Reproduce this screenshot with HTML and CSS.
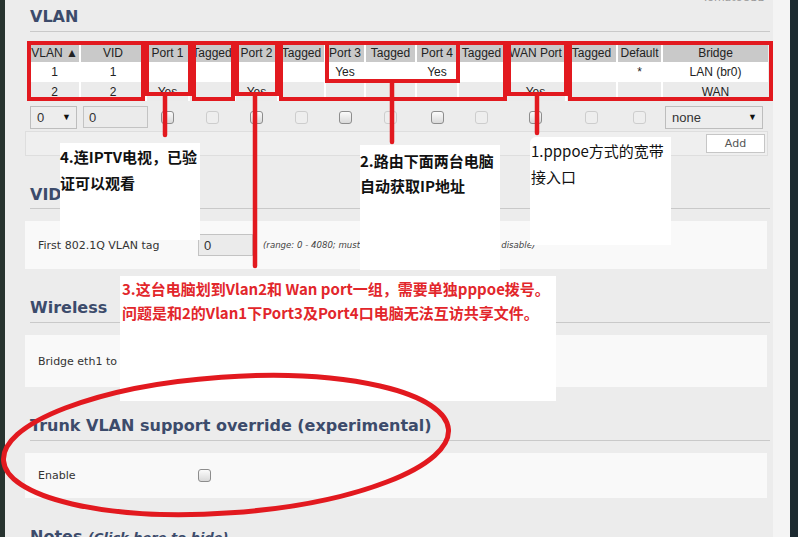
FILE: index.html
```html
<!DOCTYPE html>
<html lang="zh-CN">
<head>
<meta charset="utf-8">
<title>VLAN</title>
<link rel="stylesheet" href="styles.css">
</head>
<body>
<div class="frame">
  <div class="edge"></div>
  <div class="panel">
    <div class="brand">TomatoUSB</div>
    <h2 class="sec-title first">VLAN</h2>

    <div class="vlan-grid vlan-table">
      <div class="th">VLAN ▲</div><div class="th">VID</div><div class="th">Port 1</div><div class="th">Tagged</div><div class="th">Port 2</div><div class="th">Tagged</div><div class="th">Port 3</div><div class="th">Tagged</div><div class="th">Port 4</div><div class="th">Tagged</div><div class="th">WAN Port</div><div class="th">Tagged</div><div class="th">Default</div><div class="th">Bridge</div>

      <div class="td r1">1</div><div class="td r1">1</div><div class="td r1"></div><div class="td r1"></div><div class="td r1"></div><div class="td r1"></div><div class="td r1">Yes</div><div class="td r1"></div><div class="td r1">Yes</div><div class="td r1"></div><div class="td r1"></div><div class="td r1"></div><div class="td r1">*</div><div class="td r1">LAN (br0)</div>

      <div class="td r2">2</div><div class="td r2">2</div><div class="td r2">Yes</div><div class="td r2"></div><div class="td r2">Yes</div><div class="td r2"></div><div class="td r2"></div><div class="td r2"></div><div class="td r2"></div><div class="td r2"></div><div class="td r2">Yes</div><div class="td r2"></div><div class="td r2"></div><div class="td r2">WAN</div>
    </div>

    <div class="vlan-grid vlan-edit">
      <div class="ec start"><div class="fsel sel-vlan"><span>0</span><span class="arr">▼</span></div></div>
      <div class="ec start"><input class="txt vid-in" type="text" value="0"></div>
      <div class="ec"><input class="cb" type="checkbox"></div>
      <div class="ec"><input class="cb" type="checkbox" disabled></div>
      <div class="ec"><input class="cb" type="checkbox"></div>
      <div class="ec"><input class="cb" type="checkbox" disabled></div>
      <div class="ec"><input class="cb" type="checkbox"></div>
      <div class="ec"><input class="cb" type="checkbox" disabled></div>
      <div class="ec"><input class="cb" type="checkbox"></div>
      <div class="ec"><input class="cb" type="checkbox" disabled></div>
      <div class="ec"><input class="cb" type="checkbox"></div>
      <div class="ec"><input class="cb" type="checkbox" disabled></div>
      <div class="ec"><input class="cb" type="checkbox" disabled></div>
      <div class="ec start"><div class="fsel sel-br"><span>none</span><span class="arr">▼</span></div></div>
    </div>

    <div class="add-row"><button class="btn" type="button">Add</button></div>

    <h2 class="sec-title vid">VID Offset</h2>
    <div class="box h48">
      <label class="lbl">First 802.1Q VLAN tag</label>
      <input class="txt off-in" type="text" value="0">
      <span class="hint">(range: 0 - 4080; must be a multiple of 16; set to '0' to disable)</span>
    </div>

    <h2 class="sec-title">Wireless</h2>
    <div class="box h52">
      <label class="lbl">Bridge eth1 to</label>
      <div class="fsel sel-wl"><span>LAN (br0)</span><span class="arr">▼</span></div>
    </div>

    <h2 class="sec-title">Trunk VLAN support override (experimental)</h2>
    <div class="box h45">
      <label class="lbl">Enable</label>
      <input class="cb" type="checkbox">
    </div>

    <h2 class="sec-title notes">Notes <a class="hide-link">(Click here to hide)</a></h2>
  </div>
  <div class="strip"></div>

  <div class="note n4">4.连IPTV电视，已验<br>证可以观看</div>
  <div class="note n2">2.路由下面两台电脑<br>自动获取IP地址</div>
  <div class="note n1">1.pppoe方式的宽带<br>接入口</div>
  <div class="note n3">3.这台电脑划到Vlan2和 Wan port一组，需要单独pppoe拨号。<br>问题是和2的Vlan1下Port3及Port4口电脑无法互访共享文件。</div>

  <svg class="marks" width="798" height="537" viewBox="0 0 798 537" aria-hidden="true">
    <g fill="none" stroke="#e2191f" stroke-width="4">
      <rect x="29" y="43" width="114" height="56"/>
      <rect x="147" y="43" width="43" height="51"/>
      <rect x="194" y="43" width="39" height="56"/>
      <rect x="237" y="43" width="40" height="51"/>
      <rect x="281" y="43" width="224" height="56"/>
      <rect x="327" y="43" width="131" height="38"/>
      <rect x="509" y="43" width="57" height="51"/>
      <rect x="570" y="43" width="201" height="56"/>
    </g>
    <g stroke="#e2191f" stroke-width="4.5" stroke-linecap="round">
      <line x1="165" y1="96" x2="165" y2="135"/>
      <line x1="255" y1="96" x2="255" y2="266"/>
      <line x1="392" y1="83" x2="392" y2="142"/>
      <line x1="537" y1="96" x2="537" y2="133"/>
    </g>
    <ellipse cx="226" cy="445" rx="223" ry="68" transform="rotate(-4 226 445)" fill="none" stroke="#e2191f" stroke-width="5"/>
  </svg>
</div>
</body>
</html>
```
FILE: styles.css
```css
html, body {
  margin: 0;
  padding: 0;
}
body {
  background: #1c2a30;
  font-family: "DejaVu Sans", sans-serif;
  color: #222;
}
.frame {
  position: relative;
  width: 798px;
  height: 537px;
  overflow: hidden;
  display: flex;
}
.edge {
  width: 5px;
  background: #27332f;
}
.panel {
  width: 768px;
  box-sizing: border-box;
  padding: 0 3px 0 25px;
  background: #ececec;
  overflow: hidden;
}
.strip {
  width: 17px;
  background: #f4f4f4;
}

.brand {
  margin-top: -8px;
  height: 12px;
  font-size: 11px;
  line-height: 12px;
  text-align: right;
  padding-right: 5px;
  color: #9a9a9a;
}

.sec-title {
  margin: 29px 0 0;
  padding-bottom: 4px;
  font-family: "DejaVu Sans", sans-serif;
  font-weight: bold;
  font-size: 16px;
  line-height: 20px;
  color: #3c4b6b;
  border-bottom: 1px solid #c9c9c9;
  white-space: nowrap;
}
.sec-title.first { margin-top: 3px; }
.sec-title.vid { padding-bottom: 3px; }
.sec-title.notes { border-bottom: none; }
.hide-link {
  font-style: italic;
  font-size: 13px;
}

/* VLAN table */
.vlan-grid {
  display: grid;
  grid-template-columns: 49px 64px 41px 44px 41px 45px 38px 49px 40px 45px 59px 49px 43px 105px;
  column-gap: 2px;
  width: 738px;
}
.vlan-table {
  margin-top: 12px;
  background: #fff;
  font-family: "Liberation Sans", Arial, sans-serif;
  font-size: 12px;
  color: #222;
}
.th {
  height: 18px;
  line-height: 18px;
  background: #c9c9c9;
  text-align: center;
  white-space: nowrap;
  overflow: hidden;
}
.td {
  text-align: center;
  white-space: nowrap;
}
.td.r1 {
  height: 20px;
  line-height: 20px;
  background: #fff;
}
.td.r2 {
  height: 19px;
  line-height: 21px;
  background: #ebebeb;
}

.vlan-edit {
  margin-top: 4px;
  height: 24px;
}
.ec {
  display: flex;
  align-items: center;
  justify-content: center;
}
.ec.start { justify-content: flex-start; }

.fsel {
  box-sizing: border-box;
  height: 23px;
  display: flex;
  align-items: center;
  justify-content: space-between;
  padding: 0 5px 0 6px;
  border: 1px solid #bdbdbd;
  background: #ededed;
  font-family: "Liberation Sans", Arial, sans-serif;
  font-size: 13px;
  color: #333;
  white-space: nowrap;
}
.fsel .arr {
  font-size: 9px;
  color: #111;
}
.sel-vlan { width: 47px; }
.sel-br { width: 98px; margin-left: 2px; }
.sel-wl { width: 110px; }

.txt {
  box-sizing: border-box;
  height: 22px;
  margin: 0;
  padding: 0 5px;
  border: 1px solid #c3c3c3;
  background: #ebebeb;
  font-family: "Liberation Sans", Arial, sans-serif;
  font-size: 13px;
  color: #333;
  outline: none;
}
.vid-in { width: 65px; margin-left: 2px; }
.off-in { width: 55px; }

.cb {
  -webkit-appearance: none;
  appearance: none;
  box-sizing: border-box;
  width: 13px;
  height: 13px;
  margin: 0;
  border: 1px solid #8d8d8d;
  border-radius: 3px;
  background: linear-gradient(#fbfbfb, #d9d9d9);
}
.cb:disabled {
  border-color: #cdcdcd;
  background: #eeeeee;
}

.add-row {
  box-sizing: border-box;
  margin: 2px 2px 0 -5px;
  height: 25px;
  display: flex;
  justify-content: flex-end;
  align-items: center;
  padding-right: 2px;
  background: #efefef;
  border: 1px solid #dedede;
}
.btn {
  box-sizing: border-box;
  width: 59px;
  height: 19px;
  padding: 0;
  border: 1px solid #c6c6c6;
  background: #fff;
  font-family: "DejaVu Sans", sans-serif;
  font-size: 11px;
  color: #555;
}

/* settings boxes */
.box {
  margin: 12px 3px 0 -5px;
  display: flex;
  align-items: center;
  padding-left: 13px;
  background: #f9f9f9;
  font-size: 11px;
  color: #333;
}
.box.h48 { height: 48px; }
.box.h52 { height: 52px; }
.box.h45 { height: 45px; }
.lbl {
  width: 160px;
  flex: none;
  white-space: nowrap;
}
.hint {
  margin-left: 10px;
  font-size: 8.6px;
  font-style: italic;
  color: #444;
  white-space: nowrap;
}

/* annotations laid over the screenshot */
.note {
  position: absolute;
  box-sizing: border-box;
  background: #fff;
  font-family: "Noto Sans CJK SC", "Noto Sans", sans-serif;
  font-size: 15px;
  white-space: nowrap;
  color: #111;
}
.n4 {
  left: 60px;
  top: 143px;
  width: 140px;
  height: 97px;
  padding-top: 1px;
  line-height: 26px;
  font-weight: bold;
}
.n2 {
  left: 360px;
  top: 145px;
  width: 140px;
  height: 125px;
  padding-top: 3px;
  line-height: 25px;
  font-weight: bold;
}
.n1 {
  left: 530px;
  top: 137px;
  width: 141px;
  height: 108px;
  padding: 1px 0 0 1px;
  line-height: 26px;
  border-top-left-radius: 6px;
}
.n3 {
  left: 120px;
  top: 276px;
  width: 436px;
  height: 125px;
  padding: 1px 0 0 2px;
  line-height: 24px;
  font-weight: bold;
  color: #e2262b;
}

.marks {
  position: absolute;
  left: 0;
  top: 0;
  pointer-events: none;
}
```
